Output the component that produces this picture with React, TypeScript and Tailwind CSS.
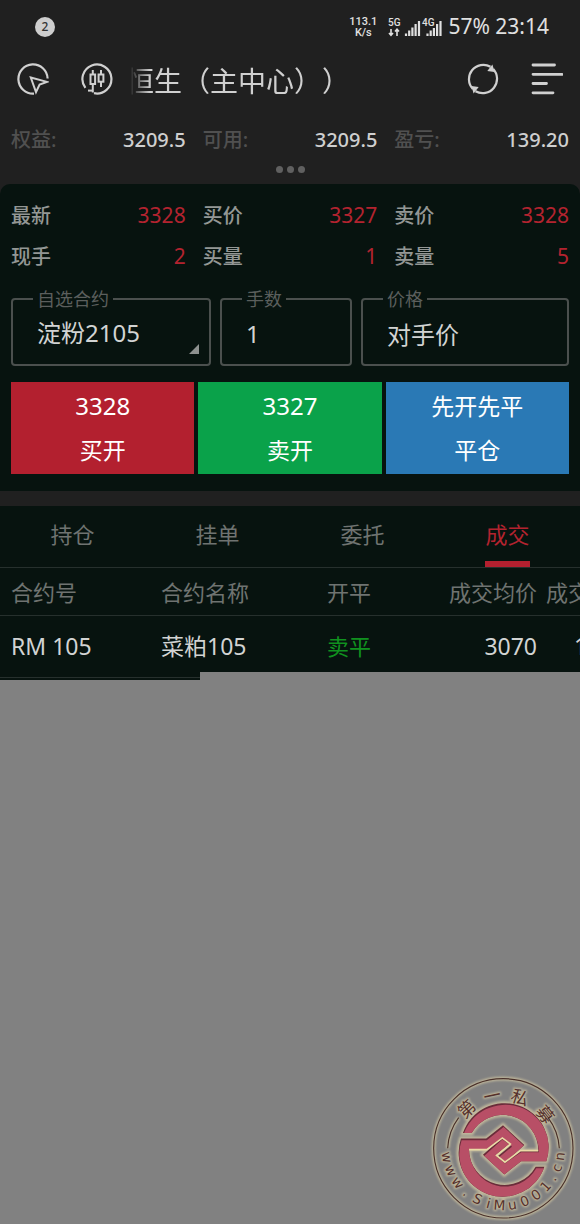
import React from "react";

const account = [
  { label: "权益:", value: "3209.5" },
  { label: "可用:", value: "3209.5" },
  { label: "盈亏:", value: "139.20" },
];

const quotes = [
  { label: "最新", value: "3328" },
  { label: "买价", value: "3327" },
  { label: "卖价", value: "3328" },
  { label: "现手", value: "2" },
  { label: "买量", value: "1" },
  { label: "卖量", value: "5" },
];

const tabs = ["持仓", "挂单", "委托", "成交"];

const sealTop: [string, number][] = [
  ["第", -43],
  ["一", -12],
  ["私", 18],
  ["募", 51],
];

const sealBottom: [string, number][] = [
  ["w", -81], ["w", -67], ["w", -53], [".", -40], ["S", -27], ["i", -15], ["M", -4],
  ["u", 9], ["0", 22], ["0", 35], ["1", 48], [".", 59], ["c", 70], ["n", 82],
];

function PointerIcon() {
  return (
    <svg viewBox="0 0 32 32" className="size-8" fill="none" stroke="#d0d0d0" strokeWidth="2.2">
      <path d="M30.6 15.5A14.6 14.6 0 1 0 17 30.6" />
      <path d="M13.8 14.5L30 18.9L22.6 21.6L19 29.2Z" strokeWidth="2" strokeLinejoin="miter" />
    </svg>
  );
}

function CandleIcon() {
  return (
    <svg viewBox="0 0 32 32" className="size-8" fill="none" stroke="#d0d0d0" strokeWidth="2">
      <path d="M4.4 24.8A14.5 14.5 0 1 1 13 30.2" strokeWidth="2.2" />
      <path d="M7 27.6H11.8" />
      <path d="M11.8 7V11.5M11.8 21V29.5M20 7V11.5M20 18.7V24" />
      <rect x="9.5" y="11.5" width="4.6" height="9.5" />
      <rect x="17.6" y="11.5" width="4.8" height="7.2" />
    </svg>
  );
}

function RefreshIcon() {
  return (
    <svg viewBox="0 0 32 32" className="size-8" fill="none" stroke="#d0d0d0" strokeWidth="2.2">
      <path d="M5.8 26A14.4 14.4 0 0 1 23.5 3.7" />
      <path d="M26.2 6A14.4 14.4 0 0 1 8.5 28.3" />
      <path d="M20.3 8L27.6 9L25.4 1.4Z" fill="#d0d0d0" stroke="none" />
      <path d="M11.7 24L4.4 23L6.6 30.6Z" fill="#d0d0d0" stroke="none" />
    </svg>
  );
}

function MenuIcon() {
  return (
    <svg viewBox="0 0 32 32" className="size-8" fill="none" stroke="#d0d0d0" strokeWidth="2.8" strokeLinecap="round">
      <path d="M2 2H23.5M2 11.3H31M2 20.5H15.5M2 29.8H22" />
    </svg>
  );
}

function SignalIcon() {
  return (
    <svg viewBox="0 0 56 20" className="h-5 w-14" stroke="#e0e0e0" fill="#e0e0e0">
      <path d="M3 12V18M1 16L3 18.3L5 16M9 19V12.5M7 14.5L9 12.2L11 14.5" fill="none" strokeWidth="1.6" />
      <path d="M18 16.5V19M21.2 13.5V19M24.4 10.5V19M27.6 7V19M31 4V19" strokeWidth="2.2" />
      <path d="M39.5 16.5V19M42.7 13.5V19M45.9 11V19M49.1 7V19M52.5 4V19" strokeWidth="2.2" />
      <text x="0" y="9" fontSize="10" fontWeight="500" stroke="none" fontFamily="Roboto, sans-serif">5G</text>
      <text x="34" y="9" fontSize="10" fontWeight="500" stroke="none" fontFamily="Roboto, sans-serif">4G</text>
    </svg>
  );
}

const hook =
  "M110 188A136 136 0 0 1 368 275H290L238 316L172 255L230 203L255 220L212 255L238 277L288 242H343A110 110 0 0 0 137 188Z";

function Seal() {
  const glyphs = (
    <>
      {sealTop.map(([ch, a]) => (
        <text key={ch} transform={`translate(235 235) rotate(${a})`} y="-142" fontSize="52" fontFamily="'Noto Sans CJK SC', sans-serif">
          {ch}
        </text>
      ))}
      {sealBottom.map(([ch, a], i) => (
        <text key={i} transform={`translate(235 235) rotate(${-a})`} y="185" fontSize="41" fontFamily="'DejaVu Sans', sans-serif">
          {ch}
        </text>
      ))}
    </>
  );
  const rings = (
    <>
      <circle cx="235" cy="235" r="209" />
      <path d="M68 235A167 167 0 0 1 101 143" />
      <path d="M369 143A167 167 0 0 1 403 235" />
    </>
  );
  const hooks = (
    <>
      <path d={hook} />
      <path d={hook} transform="rotate(180 236 240)" />
    </>
  );
  return (
    <svg viewBox="0 0 465 462" className="h-[154px] w-[155px]" textAnchor="middle">
      <defs>
        <filter id="glow" x="-20%" y="-20%" width="140%" height="140%">
          <feGaussianBlur stdDeviation="3" />
        </filter>
        <clipPath id="hookA">
          <path d={hook} />
        </clipPath>
        <clipPath id="hookB">
          <path d={hook} transform="rotate(180 236 240)" />
        </clipPath>
      </defs>
      <g filter="url(#glow)" fill="none" stroke="#d6caa4" strokeWidth="11" opacity="0.75">
        {rings}
        <g strokeWidth="7">{glyphs}</g>
        <g strokeWidth="13" transform="translate(7 7) scale(0.97)">{hooks}</g>
      </g>
      <g fill="none" stroke="#49302a" strokeWidth="3.5">
        {rings}
      </g>
      <g fill="#55302c">{glyphs}</g>
      <g transform="translate(7 7) scale(0.97)">
        <g fill="#6a2c3a">{hooks}</g>
        <g clipPath="url(#hookA)">
          <path d={hook} transform="translate(2 5)" fill="#b84f66" />
        </g>
        <g clipPath="url(#hookB)">
          <path d={hook} transform="translate(2 5) rotate(180 236 240)" fill="#b84f66" />
        </g>
        <path d="M129 239H184L232 203L257 222L214 257L240 278L288 242H343" fill="none" stroke="#eadba6" strokeWidth="5" />
      </g>
    </svg>
  );
}

function Field({ label, id, children }: { label: string; id: string; children: React.ReactNode }) {
  return (
    <fieldset className="h-[77px] min-w-0 rounded border-2 border-[#4b504e] pl-6">
      <legend className="-ml-1 px-1 text-lg leading-5 text-[#5b5f5d]">
        <label htmlFor={id}>{label}</label>
      </legend>
      {children}
    </fieldset>
  );
}

const inputStyle = "block h-12 w-full appearance-none bg-transparent text-[24px] text-[#d2d4d3] outline-none";

export default function App() {
  return (
    <div className="relative min-h-screen overflow-hidden bg-[#818181] font-['Noto_Sans','Noto_Sans_CJK_SC',sans-serif]">
      <header className="bg-[#202020]">
        <div className="flex h-[54px] items-center pr-[31px] pl-[35px] text-[#e0e0e0]">
          <span className="flex size-5 items-center justify-center rounded-full bg-[#cecece] text-xs font-medium text-[#333]">2</span>
          <div className="ml-auto flex flex-col text-center font-['Roboto',sans-serif] text-[11px] leading-[11px] font-medium">
            <span>113.1</span>
            <span>K/s</span>
          </div>
          <div className="mr-1 ml-[11px]">
            <SignalIcon />
          </div>
          <span className="text-[21px]">57% 23:14</span>
        </div>
        <div className="flex h-[50px] items-center px-[17px]">
          <button aria-label="指针"><PointerIcon /></button>
          <button className="ml-8" aria-label="行情"><CandleIcon /></button>
          <h1 className="ml-[13px] pt-1 text-[28px] leading-10 text-[#d0d0d0] [mask-image:linear-gradient(to_right,transparent_4px,black_24px)] [text-spacing-trim:space-all]">
            恒生（主中心））
          </h1>
          <button className="ml-auto" aria-label="刷新"><RefreshIcon /></button>
          <button className="ml-8" aria-label="菜单"><MenuIcon /></button>
        </div>
        <dl className="grid grid-cols-3 gap-x-[17px] px-[11px] pt-5 text-xl leading-8 font-medium">
          {account.map((a) => (
            <div key={a.label} className="flex justify-between">
              <dt className="text-[#505050]">{a.label}</dt>
              <dd className="text-[#cfcfcf]">{a.value}</dd>
            </div>
          ))}
        </dl>
        <div className="flex h-7 items-center justify-center gap-1 pb-0.5 *:size-[7px] *:rounded-full *:bg-[#606060]">
          <i />
          <i />
          <i />
        </div>
      </header>

      <main className="bg-[#202020]">
        <section className="rounded-t-[10px] bg-[#07130f] px-[11px] pt-[11px] pb-[17px]">
          <dl className="grid grid-cols-3 gap-x-[17px] text-xl leading-[41px]">
            {quotes.map((q) => (
              <div key={q.label} className="flex justify-between">
                <dt className="font-medium text-[#939795]">{q.label}</dt>
                <dd className="text-[21px] text-[#b3232f]">{q.value}</dd>
              </div>
            ))}
          </dl>

          <div className="mt-3 grid grid-cols-[200fr_132fr_208fr] gap-[9px]">
            <div className="relative">
              <Field label="自选合约" id="contract">
                <select id="contract" className={inputStyle}>
                  <option>淀粉2105</option>
                </select>
              </Field>
              <svg viewBox="0 0 10 10" className="pointer-events-none absolute right-3 bottom-3 size-2.5">
                <path d="M10 0V10H0Z" fill="#8d918f" />
              </svg>
            </div>
            <Field label="手数" id="lots">
              <input id="lots" defaultValue="1" className={inputStyle} />
            </Field>
            <Field label="价格" id="price">
              <input id="price" defaultValue="对手价" className={inputStyle} />
            </Field>
          </div>

          <div className="mt-4 grid grid-cols-3 gap-1 text-[23px] leading-11 text-white">
            <button className="bg-[#b3202f] py-0.5">
              <span className="block text-[24px]">3328</span>
              <span className="block">买开</span>
            </button>
            <button className="bg-[#0aa24a] py-0.5">
              <span className="block text-[24px]">3327</span>
              <span className="block">卖开</span>
            </button>
            <button className="bg-[#2a79b5] py-0.5">
              <span className="block">先开先平</span>
              <span className="block">平仓</span>
            </button>
          </div>
        </section>

        <section className="relative mt-[15px] bg-[#07130f]">
          <div role="tablist" className="grid grid-cols-4 border-b border-[#26302d] text-[22px] text-[#6f7371]">
            {tabs.map((t) => (
              <button
                key={t}
                role="tab"
                aria-selected={t === "成交"}
                className="mx-auto h-[61px] border-b-[6px] border-transparent pt-0.5 aria-selected:border-[#b3202f] aria-selected:text-[#b3232f]"
              >
                {t}
              </button>
            ))}
          </div>
          <div className="overflow-hidden pb-0.5">
            <table className="w-[620px] table-fixed text-left text-[23px] whitespace-nowrap text-[#d2d4d3]">
              <colgroup>
                <col className="w-[161px]" />
                <col className="w-[166px]" />
                <col className="w-[110px]" />
                <col className="w-[100px]" />
                <col />
              </colgroup>
              <thead>
                <tr className="h-[47px] border-b border-[#26302d] text-[22px] text-[#6f7371] *:font-normal">
                  <th className="pt-0.5 pl-[11px]">合约号</th>
                  <th className="pt-0.5">合约名称</th>
                  <th className="pt-0.5">开平</th>
                  <th className="pt-0.5 text-right">成交均价</th>
                  <th className="pt-0.5 pl-[9px]">成交量</th>
                </tr>
              </thead>
              <tbody>
                <tr className="h-[62px] border-b border-[#26302d]">
                  <td className="pl-[11px]">RM 105</td>
                  <td>菜粕105</td>
                  <td className="text-[22px] text-[#10911f]">卖平</td>
                  <td className="text-right">3070</td>
                  <td className="pl-1 text-center">1</td>
                </tr>
              </tbody>
            </table>
          </div>
          <div className="absolute right-0 bottom-0 left-[200px] h-2 bg-[#818181]" />
        </section>
      </main>

      <div className="absolute right-0 bottom-0">
        <Seal />
      </div>
    </div>
  );
}
